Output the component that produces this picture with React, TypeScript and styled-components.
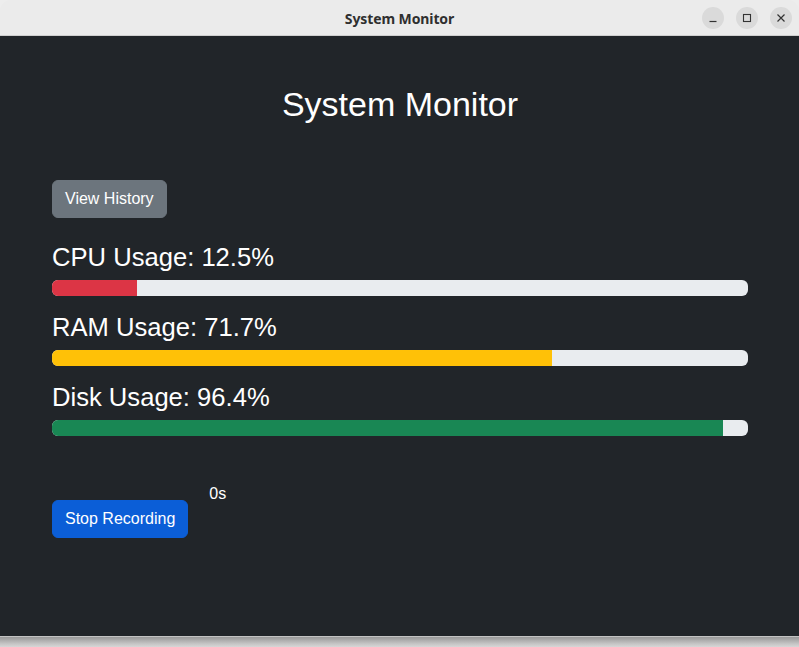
import React from "react";
import styled, { createGlobalStyle } from "styled-components";

const GlobalStyle = createGlobalStyle`
  html, body { margin: 0; padding: 0; }
  body {
    background: #ededed;
    font-family: "Liberation Sans", Arial, sans-serif;
    overflow: hidden;
  }
`;

const Page = styled.div`
  width: 799px;
  height: 647px;
  display: flex;
  flex-direction: column;
  background: linear-gradient(#ededed 0px, #ededed 636px, #999999 637px, #ababab 640px, #c6c6c6 644px, #d6d6d6 647px);
`;

const Window = styled.div`
  height: 636px;
  display: flex;
  flex-direction: column;
  border-radius: 11px 11px 0 0;
  overflow: hidden;
`;

const TitleBar = styled.div`
  height: 35px;
  flex: none;
  background: #ebebeb;
  border-bottom: 1px solid #cfcfcf;
  display: grid;
  grid-template-columns: 1fr auto 1fr;
  align-items: center;
`;

const Title = styled.div`
  grid-column: 2;
  font-family: "Noto Sans", "DejaVu Sans", sans-serif;
  font-weight: 700;
  font-size: 14px;
  color: #2f2f2f;
  letter-spacing: -0.1px;
  padding-top: 1px;
`;

const Controls = styled.div`
  grid-column: 3;
  justify-self: end;
  display: flex;
  gap: 12px;
  padding-right: 7px;
`;

const CtrlButton = styled.div`
  width: 22px;
  height: 22px;
  border-radius: 50%;
  background: #dadada;
  display: flex;
  align-items: center;
  justify-content: center;
`;

const Content = styled.main`
  flex: 1;
  background: #212529;
  color: #fff;
`;

const Container = styled.div`
  width: 696px;
  margin: 0 51px 0 52px;
  padding-top: 48px;
  display: flex;
  flex-direction: column;
  align-items: flex-start;
`;

const Heading = styled.h1`
  align-self: stretch;
  margin: 0 0 55px;
  font-size: 34px;
  font-weight: 400;
  line-height: 1.2;
  text-align: center;
`;

const Button = styled.button<{ $variant: "secondary" | "primary" }>`
  font-family: "Liberation Sans", Arial, sans-serif;
  font-size: 16px;
  line-height: 24px;
  padding: 6px 12px;
  border-radius: 6px;
  border: 1px solid ${(p) => (p.$variant === "primary" ? "#0b5ed7" : "#6c757d")};
  background: ${(p) => (p.$variant === "primary" ? "#0b5ed7" : "#6c757d")};
  color: #fff;
  cursor: pointer;
`;

const HistoryRow = styled.div`
  margin-bottom: 24px;
`;

const Metric = styled.section`
  align-self: stretch;
  margin-bottom: 16px;
`;

const MetricLabel = styled.h3`
  margin: 0 0 8px;
  font-size: 25.6px;
  font-weight: 400;
  line-height: 30px;
`;

const Track = styled.div`
  height: 16px;
  border-radius: 6px;
  background: #e9ecef;
  overflow: hidden;
  display: flex;
`;

const Fill = styled.div<{ $color: string }>`
  height: 100%;
  background: ${(p) => p.$color};
`;

const RecordRow = styled.div`
  margin-top: 30px;
  display: flex;
  align-items: flex-start;
  gap: 21px;
`;

const RecordButton = styled(Button)`
  margin-top: 18px;
`;

const Timer = styled.span`
  font-size: 16px;
  line-height: 24px;
`;

const metrics = [
  { label: "CPU Usage", value: "12.5%", width: 12.2, color: "#dc3545" },
  { label: "RAM Usage", value: "71.7%", width: 71.8, color: "#ffc107" },
  { label: "Disk Usage", value: "96.4%", width: 96.4, color: "#198754" },
];

export default function App() {
  return (
    <>
      <GlobalStyle />
      <Page>
        <Window>
          <TitleBar>
            <Title>System Monitor</Title>
            <Controls>
              <CtrlButton>
                <svg width="10" height="10" viewBox="0 0 10 10">
                  <path d="M1.5 8.5h7" stroke="#333" strokeWidth="1.2" />
                </svg>
              </CtrlButton>
              <CtrlButton>
                <svg width="10" height="10" viewBox="0 0 10 10">
                  <rect x="1.5" y="1.5" width="7" height="7" fill="none" stroke="#333" strokeWidth="1.1" />
                </svg>
              </CtrlButton>
              <CtrlButton>
                <svg width="10" height="10" viewBox="0 0 10 10">
                  <path d="M1.5 1.5l7 7M8.5 1.5l-7 7" stroke="#333" strokeWidth="1.2" />
                </svg>
              </CtrlButton>
            </Controls>
          </TitleBar>
          <Content>
            <Container>
              <Heading>System Monitor</Heading>
              <HistoryRow>
                <Button $variant="secondary">View History</Button>
              </HistoryRow>
              {metrics.map((m) => (
                <Metric key={m.label}>
                  <MetricLabel>
                    {m.label}: {m.value}
                  </MetricLabel>
                  <Track>
                    <Fill $color={m.color} style={{ width: `${m.width}%` }} />
                  </Track>
                </Metric>
              ))}
              <RecordRow>
                <RecordButton $variant="primary">Stop Recording</RecordButton>
                <Timer>0s</Timer>
              </RecordRow>
            </Container>
          </Content>
        </Window>
      </Page>
    </>
  );
}
